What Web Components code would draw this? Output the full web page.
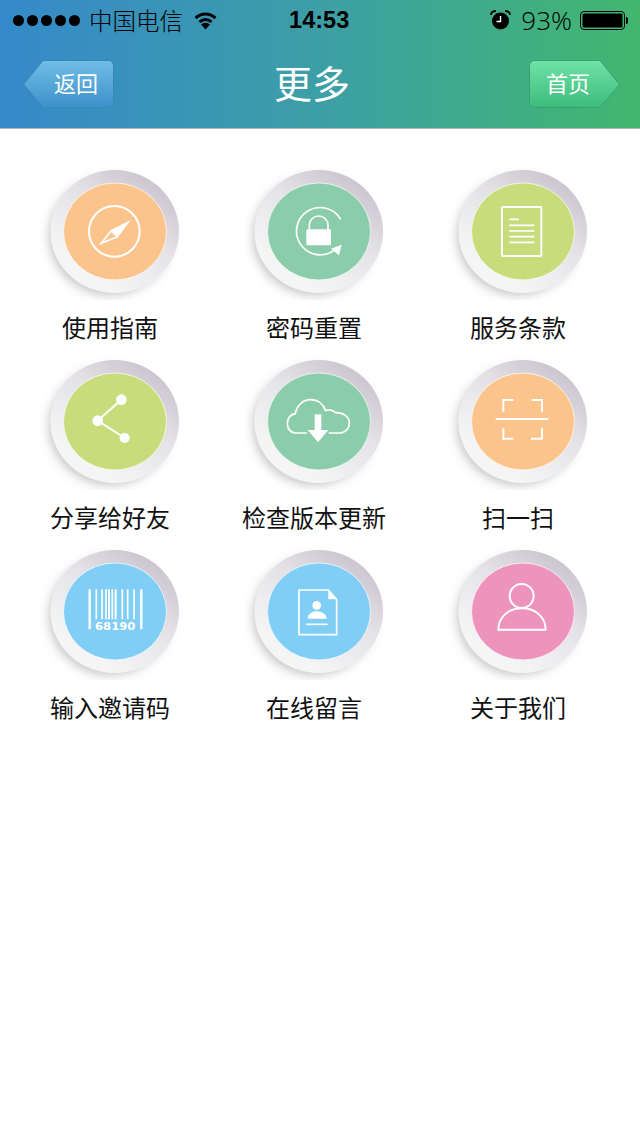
<!DOCTYPE html>
<html lang="zh">
<head>
<meta charset="utf-8">
<title>更多</title>
<style>
  html, body { margin: 0; background: #fff; }
  body { font-family: "Noto Sans CJK SC", "Liberation Sans", sans-serif; }
</style>
</head>
<body>
<more-page>
  <app-header slot="header" title="更多" back="返回" home="首页"></app-header>

  <more-tile label="使用指南" color="#fbc48c">
    <svg slot="icon" viewBox="0 0 450 420" fill="none" stroke="#fff">
      <circle cx="223" cy="214" r="76" stroke-width="6"/>
      <polygon points="272,180 213,210 235,230" fill="#fff" stroke="none"/>
      <polygon points="184,250 213,213 232,230" stroke-width="5"/>
    </svg>
  </more-tile>
  <more-tile label="密码重置" color="#8bcdaa" col="1">
    <svg slot="icon" viewBox="-3 0 450 420" fill="none" stroke="#fff">
      <path d="M287,178 A71,71 0 1 0 266,272" stroke-width="5"/>
      <polygon points="290,254 258,266 282,286" fill="#fff" stroke="none"/>
      <rect x="184" y="208" width="74" height="48" rx="4" fill="#fff" stroke="none"/>
      <path d="M193,208 V196 A28,28 0 0 1 249,196 V208" stroke-width="5"/>
    </svg>
  </more-tile>
  <more-tile label="服务条款" color="#c9dc7c" col="2">
    <svg slot="icon" viewBox="-6 0 450 420" fill="none" stroke="#fff">
      <rect x="156" y="141" width="118" height="147" rx="2" stroke-width="6"/>
      <path d="M178,178 H207 M178,196 H253 M178,213 H253 M178,230 H253 M178,247 H253" stroke-width="5"/>
    </svg>
  </more-tile>

  <more-tile label="分享给好友" color="#c9dc7c">
    <svg slot="icon" viewBox="0 0 450 420" fill="#fff" stroke="#fff">
      <path d="M244,149 L173,212 L254,264" fill="none" stroke-width="6"/>
      <circle cx="244" cy="149" r="16" stroke="none"/>
      <circle cx="173" cy="212" r="16" stroke="none"/>
      <circle cx="254" cy="264" r="15" stroke="none"/>
    </svg>
  </more-tile>
  <more-tile label="检查版本更新" color="#8bcdaa" col="1">
    <svg slot="icon" viewBox="-3 0 450 420" fill="none" stroke="#fff">
      <path d="M186,249 H155 C136,249 127,235 127,221 C127,205 137,194 151,191 C155,166 174,149 197,149 C218,149 235,162 242,182 C250,178 264,180 271,188 C295,187 313,200 313,219 C313,236 300,249 283,249 H251" stroke-width="5"/>
      <rect x="209" y="193" width="20" height="48" fill="#fff" stroke="none"/>
      <polygon points="188,240 250,240 219,277" fill="#fff" stroke="none"/>
    </svg>
  </more-tile>
  <more-tile label="扫一扫" color="#fbc48c" col="2">
    <svg slot="icon" viewBox="-6 0 450 420" fill="none" stroke="#fff" stroke-width="6">
      <path d="M160,185 V150 H190 M245,150 H276 V185 M160,235 V266 H190 M276,235 V266 H243 M137,207 H295"/>
    </svg>
  </more-tile>

  <more-tile label="输入邀请码" color="#80cdf5">
    <svg slot="icon" viewBox="0 0 450 420" fill="none" stroke="#fff">
      <path d="M149,148 V268 M304,148 V268" stroke-width="7"/>
      <path d="M169,148 V238 M186,148 V238 M198,148 V238 M217,148 V238 M247,148 V238 M263,148 V238 M282,148 V238" stroke-width="5"/>
      <path d="M207,148 V238 M227,148 V238" stroke-width="6"/>
      <text x="165" y="269" font-family="DejaVu Sans" font-weight="700" font-size="34" fill="#fff" stroke="none" textLength="121" lengthAdjust="spacingAndGlyphs">68190</text>
    </svg>
  </more-tile>
  <more-tile label="在线留言" color="#80cdf5" col="1">
    <svg slot="icon" viewBox="-3 0 450 420" fill="none" stroke="#fff">
      <path d="M162,150 H250 L275,178 V284 H162 Z" stroke-width="5"/>
      <polygon points="250,150 275,178 250,178" fill="#fff" stroke="none"/>
      <circle cx="215" cy="196" r="13" fill="#fff" stroke="none"/>
      <path d="M188,236 C188,222 203,214 215,214 C229,214 245,222 245,236 Z" fill="#fff" stroke="none"/>
      <path d="M184,253 H248" stroke-width="5"/>
    </svg>
  </more-tile>
  <more-tile label="关于我们" color="#ee93bd" col="2">
    <svg slot="icon" viewBox="-6 0 450 420" fill="none" stroke="#fff" stroke-width="6">
      <circle cx="215" cy="168" r="36"/>
      <path d="M145,269 C145,232 175,205 216,205 C257,205 287,232 287,269 Z"/>
    </svg>
  </more-tile>
</more-page>

<script>
(function () {
  'use strict';

  class StatusBar extends HTMLElement {
    constructor() {
      super();
      this.attachShadow({mode: 'open'});
      this.shadowRoot.innerHTML = `
      <style>
        :host {
          display: flex;
          align-items: center;
          justify-content: space-between;
          height: 40px;
          padding: 0 12px 0 13px;
          color: #000;
          box-sizing: border-box;
        }
        .group { display: flex; align-items: center; }
        .dots { display: flex; gap: 3px; margin-right: 9px; }
        .dots i { width: 11px; height: 11px; border-radius: 50%; background: #000; }
        .carrier { font: 300 23.5px/40px "Noto Sans CJK SC", sans-serif; margin-right: 10px; }
        .time { font: 700 23.5px/40px "Liberation Sans", sans-serif; margin-right: 70px; }
        .percent { font: 300 26px/40px "Open Sans", sans-serif; margin: 0 8px 0 10px; }
        svg { display: block; }
      </style>
      <div class="group">
        <div class="dots"><i></i><i></i><i></i><i></i><i></i></div>
        <span class="carrier">中国电信</span>
        <svg width="25" height="19" viewBox="0 0 25 19" fill="none" stroke="#000" stroke-width="3">
          <path d="M2.6,7.1 A14,14 0 0 1 22.4,7.1"/>
          <path d="M6.5,11 A8.5,8.5 0 0 1 18.5,11"/>
          <path d="M12.5,18.5 L8,13.5 A6.4,6.4 0 0 1 17,13.5 Z" fill="#000" stroke="none"/>
        </svg>
      </div>
      <span class="time">14:53</span>
      <div class="group">
        <svg width="21" height="20" viewBox="0 0 21 20">
          <circle cx="10.5" cy="11" r="8.5" fill="#000"/>
          <path d="M10.5,6 V11.5 H6.5" fill="none" stroke="#fff" stroke-width="1.4"/>
          <path d="M1,5 C1,2 3,1 6,1 M20,5 C20,2 18,1 15,1" fill="none" stroke="#000" stroke-width="1.8"/>
        </svg>
        <span class="percent">93%</span>
        <svg width="48" height="20" viewBox="0 -1 48 20">
          <rect x="0.5" y="0.5" width="44" height="18" rx="3.5" fill="none" stroke="#000"/>
          <rect x="2.5" y="2.5" width="40" height="14" rx="1.5" fill="#000"/>
          <path d="M46,6 H46.5 A1.5,3.5 0 0 1 46.5,13 H46 Z" fill="#000"/>
        </svg>
      </div>
    `;
    }
  }
  customElements.define('status-bar', StatusBar);

  /**
   * shape of the button depends on the dir attribute, left or right
   */
  class NavButton extends HTMLElement {
    constructor() {
      super();
      this.attachShadow({mode: 'open'});
      const right = this.getAttribute('dir') === 'right';
      const top = right ? '#6fe2a8' : '#70bde6';
      const bottom = right ? '#3ebc7c' : '#3d91ca';
      const line = right ? '#3a9f70' : '#3c85b5';
      const id = right ? 'fillRight' : 'fillLeft';
      const shape = right
        ? 'M5.5,0.5 H71 L90.5,24.5 L71,47.5 H5.5 A5,5 0 0 1 0.5,42.5 V5.5 A5,5 0 0 1 5.5,0.5 Z'
        : 'M85.5,0.5 H20 L0.5,24.5 L20,47.5 H85.5 A5,5 0 0 0 90.5,42.5 V5.5 A5,5 0 0 0 85.5,0.5 Z';
      this.shadowRoot.innerHTML = `
      <style>
        :host {
          display: grid;
          width: 91px;
          height: 48px;
          color: #fff;
          font: 22px/44px "Noto Sans CJK SC", sans-serif;
        }
        svg, .label { grid-area: 1 / 1; }
        svg { display: block; }
        .label { padding-left: ${right ? 17 : 31}px; }
      </style>
      <svg width="91" height="48" viewBox="0 0 91 48">
        <defs>
          <linearGradient id="${id}" x1="0" y1="0" x2="0" y2="1">
            <stop offset="0" stop-color="${top}"/>
            <stop offset="1" stop-color="${bottom}"/>
          </linearGradient>
        </defs>
        <path d="${shape}" fill="url(#${id})" stroke="${line}"/>
      </svg>
      <span class="label"><slot></slot></span>
    `;
    }
  }
  customElements.define('nav-button', NavButton);

  class AppHeader extends HTMLElement {
    constructor() {
      super();
      this.attachShadow({mode: 'open'});
      this.shadowRoot.innerHTML = `
      <style>
        :host {
          display: block;
          background: linear-gradient(90deg, #3589ca 0%, #3d9fa6 50%, #42b76e 100%);
          border-bottom: 1px solid #b3b3b3;
        }
        nav {
          display: flex;
          align-items: flex-start;
          justify-content: space-between;
          height: 88px;
          padding: 20px 20px 0 23px;
          box-sizing: border-box;
        }
        h1 {
          margin: -4px 19px 0 0;
          color: #fff;
          font: 400 38px/52px "Noto Sans CJK SC", sans-serif;
        }
      </style>
      <status-bar></status-bar>
      <nav>
        <nav-button dir="left">${this.getAttribute('back')}</nav-button>
        <h1>${this.getAttribute('title')}</h1>
        <nav-button dir="right">${this.getAttribute('home')}</nav-button>
      </nav>
    `;
    }
  }
  customElements.define('app-header', AppHeader);

  class MoreTile extends HTMLElement {
    constructor() {
      super();
      this.attachShadow({mode: 'open'});
      const color = this.getAttribute('color');
      const uid = 'tile' + (MoreTile.count = (MoreTile.count || 0) + 1);
      this.shadowRoot.innerHTML = `
      <style>
        :host {
          display: flex;
          flex-direction: column;
          align-items: center;
        }
        .art {
          display: grid;
          align-self: flex-start;
          width: 150px;
          height: 140px;
          margin-left: 32px;
        }
        .art > svg { grid-area: 1 / 1; display: block; }
        ::slotted(svg) { grid-area: 1 / 1; display: block; width: 150px; height: 140px; }
        .label {
          margin-top: 9px;
          color: #111;
          font: 400 24px/36px "Noto Sans CJK SC", sans-serif;
        }
      </style>
      <div class="art">
        <svg width="150" height="140" viewBox="0 0 150 140">
          <defs>
            <linearGradient id="${uid}r" x1="0.85" y1="0.08" x2="0.3" y2="0.85">
              <stop offset="0" stop-color="#c9c2cd"/>
              <stop offset="0.45" stop-color="#e4e2e6"/>
              <stop offset="1" stop-color="#f5f5f6"/>
            </linearGradient>
            <filter id="${uid}s" x="-30%" y="-30%" width="160%" height="160%">
              <feGaussianBlur stdDeviation="6"/>
            </filter>
            <clipPath id="${uid}c"><rect x="0" y="0" width="139" height="140"/></clipPath>
          </defs>
          <g clip-path="url(#${uid}c)">
            <ellipse cx="70" cy="76" rx="60" ry="58" fill="#777" opacity="0.5" filter="url(#${uid}s)"/>
            <ellipse cx="74.7" cy="71.5" rx="64.3" ry="61.5" fill="url(#${uid}r)"/>
            <ellipse cx="75" cy="71.5" rx="51.5" ry="48.5" fill="${color}" stroke="#fff" stroke-opacity="0.7"/>
          </g>
        </svg>
        <slot name="icon"></slot>
      </div>
      <span class="label">${this.getAttribute('label')}</span>
    `;
    }
  }
  customElements.define('more-tile', MoreTile);

  class MorePage extends HTMLElement {
    constructor() {
      super();
      this.attachShadow({mode: 'open'});
      this.shadowRoot.innerHTML = `
      <style>
        :host { display: block; min-height: 1136px; background: #fff; }
        main {
          display: grid;
          grid-template-columns: repeat(3, 204px);
          row-gap: 5px;
          padding: 31px 0 0 8px;
        }
      </style>
      <slot name="header"></slot>
      <main><slot></slot></main>
    `;
    }
  }
  customElements.define('more-page', MorePage);
}());
</script>
</body>
</html>
